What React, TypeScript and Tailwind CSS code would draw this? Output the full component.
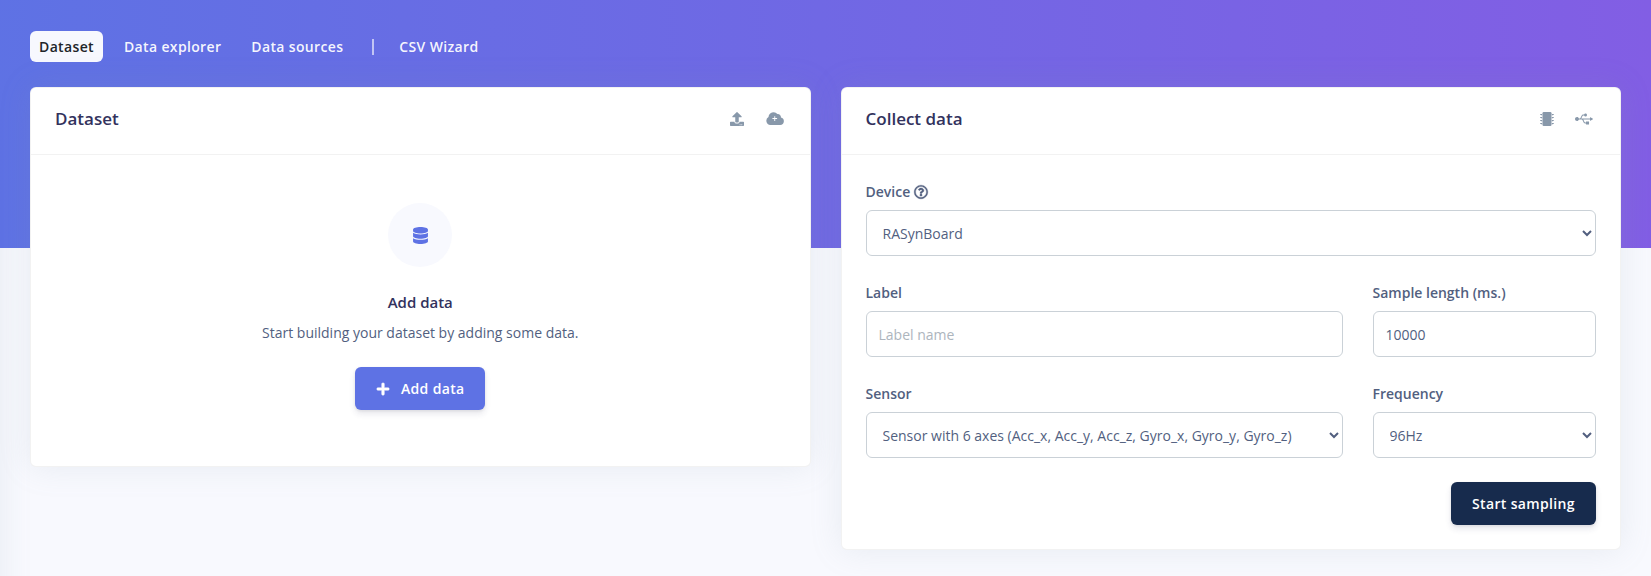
import React from 'react';
import { FaDatabase, FaPlus, FaRegQuestionCircle, FaUpload, FaUsb } from 'react-icons/fa';

const tabs = ['Dataset', 'Data explorer', 'Data sources', 'CSV Wizard'];

function CloudPlusIcon() {
  return (
    <svg viewBox="0 0 18 14" className="h-[14px] w-[18px]" fill="currentColor">
      <path
        fillRule="evenodd"
        d="M4.300 13A4.300 4.300 0 0 1 2.5 5 5.100 5.100 0 0 1 11.4 2 3.100 3.100 0 0 1 14.9 5.500 3.800 3.800 0 0 1 14.2 13ZM8.300 4.200v1.900H6.400v.9h1.900v1.900h.9V7h1.900v-.9H9.200V4.200Z"
      />
    </svg>
  );
}

function ChipIcon() {
  return (
    <svg viewBox="0 0 14 14" className="size-[14px]" fill="currentColor">
      <rect x="2.5" y="0" width="9" height="14" rx="1.2" />
      <path d="M1 2h1.200v1.200H1v-.3H0v-.6h1zM1 5h1.200v1.200H1v-.3H0v-.6h1zM1 8h1.200v1.200H1v-.3H0v-.6h1zM1 11h1.200v1.200H1v-.3H0v-.6h1zM13 2h-1.200v1.200H13v-.3h1v-.6h-1zM13 5h-1.200v1.200H13v-.3h1v-.6h-1zM13 8h-1.200v1.200H13v-.3h1v-.6h-1zM13 11h-1.200v1.200H13v-.3h1v-.6h-1z" />
    </svg>
  );
}

function Card({ title, icons, children }: { title: string; icons: React.ReactNode; children: React.ReactNode }) {
  return (
    <section className="min-w-0 flex-1 rounded-md border border-black/5 bg-white bg-clip-border shadow-[0_0_32px_0_rgba(136,152,170,0.15)]">
      <header className="flex h-[67px] items-center justify-between border-b border-black/5 px-6 pb-1">
        <h2 className="text-[17px] font-semibold text-[#32325d]">{title}</h2>
        <div className="flex items-center text-[#8898aa]">{icons}</div>
      </header>
      {children}
    </section>
  );
}

function Field({ label, children }: { label: React.ReactNode; children: React.ReactNode }) {
  return (
    <div className="flex flex-col">
      <label className="mb-2 flex h-[21px] items-center gap-1 text-sm font-semibold text-[#525f7f]">{label}</label>
      {children}
    </div>
  );
}

const control = 'h-[46px] w-full rounded-md border border-[#cad1d7] bg-white px-3 text-sm text-[#525f7f] placeholder:text-[#adb5bd]';

export default function App() {
  return (
    <div className="h-[576px] overflow-hidden bg-[#f8f9fe] bg-[linear-gradient(87deg,#5e72e4_0%,#825ee4_100%)] bg-[length:100%_248px] bg-no-repeat px-[30px] pt-[31px] font-['Open_Sans',sans-serif]">
      <nav className="flex h-[31px] items-center text-sm font-semibold tracking-[0.025em] text-white/95">
        <span className="flex h-[31px] w-[73px] items-center justify-center rounded-md bg-white/95 text-[#212529]">{tabs[0]}</span>
        <span className="ml-[21px]">{tabs[1]}</span>
        <span className="ml-[30px]">{tabs[2]}</span>
        <span className="ml-[29px] h-4 w-[2px] bg-white/60" />
        <span className="ml-[25px]">{tabs[3]}</span>
      </nav>

      <main className="mt-[25px] flex items-start gap-[30px]">
        <Card
          title="Dataset"
          icons={
            <>
              <FaUpload className="mr-[22px] size-[14px]" />
              <span className="mr-0.5"><CloudPlusIcon /></span>
            </>
          }
        >
          <div className="flex h-[311px] flex-col items-center pt-12">
            <div className="flex size-16 items-center justify-center rounded-full bg-[#f8f9fe] text-[#5e72e4]">
              <FaDatabase className="size-[17px]" />
            </div>
            <h3 className="mt-6 text-[15px] leading-[22px] font-semibold text-[#32325d]">Add data</h3>
            <p className="mt-2 text-sm leading-[24px] text-[#525f7f]">Start building your dataset by adding some data.</p>
            <button className="mt-[22px] flex h-[43px] w-[130px] items-center justify-center gap-[11px] rounded-md bg-[#5e72e4] text-sm font-semibold tracking-[0.025em] text-white shadow-[0_4px_6px_rgba(50,50,93,0.11),0_1px_3px_rgba(0,0,0,0.08)]">
              <FaPlus className="size-[14px]" stroke="currentColor" strokeWidth={16} />
              Add data
            </button>
          </div>
        </Card>

        <Card
          title="Collect data"
          icons={
            <>
              <span className="mr-[21px]"><ChipIcon /></span>
              <FaUsb className="mr-[3px] size-[18px]" />
            </>
          }
        >
          <div className="px-6 pt-[26px] pb-6">
            <Field label={<>Device <FaRegQuestionCircle className="size-[14px] overflow-visible" stroke="currentColor" strokeWidth={14} /></>}>
              <select className={control}><option>RASynBoard</option></select>
            </Field>
            <div className="mt-[26px] grid grid-cols-[477px_1fr] gap-x-[30px] gap-y-[26px]">
              <Field label="Label"><input className={control} placeholder="Label name" /></Field>
              <Field label="Sample length (ms.)"><input className={control} defaultValue="10000" /></Field>
              <Field label="Sensor">
                <select className={control}><option>Sensor with 6 axes (Acc_x, Acc_y, Acc_z, Gyro_x, Gyro_y, Gyro_z)</option></select>
              </Field>
              <Field label="Frequency">
                <select className={control}><option>96Hz</option></select>
              </Field>
            </div>
            <button className="mt-6 ml-auto flex h-[43px] w-[145px] items-center justify-center rounded-md bg-[#172b4d] text-sm font-semibold tracking-[0.025em] text-white shadow-[0_4px_6px_rgba(50,50,93,0.11),0_1px_3px_rgba(0,0,0,0.08)]">
              Start sampling
            </button>
          </div>
        </Card>
      </main>
      <div className="pointer-events-none absolute top-[248px] left-0 h-[328px] w-[30px] overflow-hidden">
        <div className="-mt-10 -ml-10 h-[408px] w-10 shadow-[0_0_32px_0_rgba(136,152,170,0.15)]" />
      </div>
    </div>
  );
}
